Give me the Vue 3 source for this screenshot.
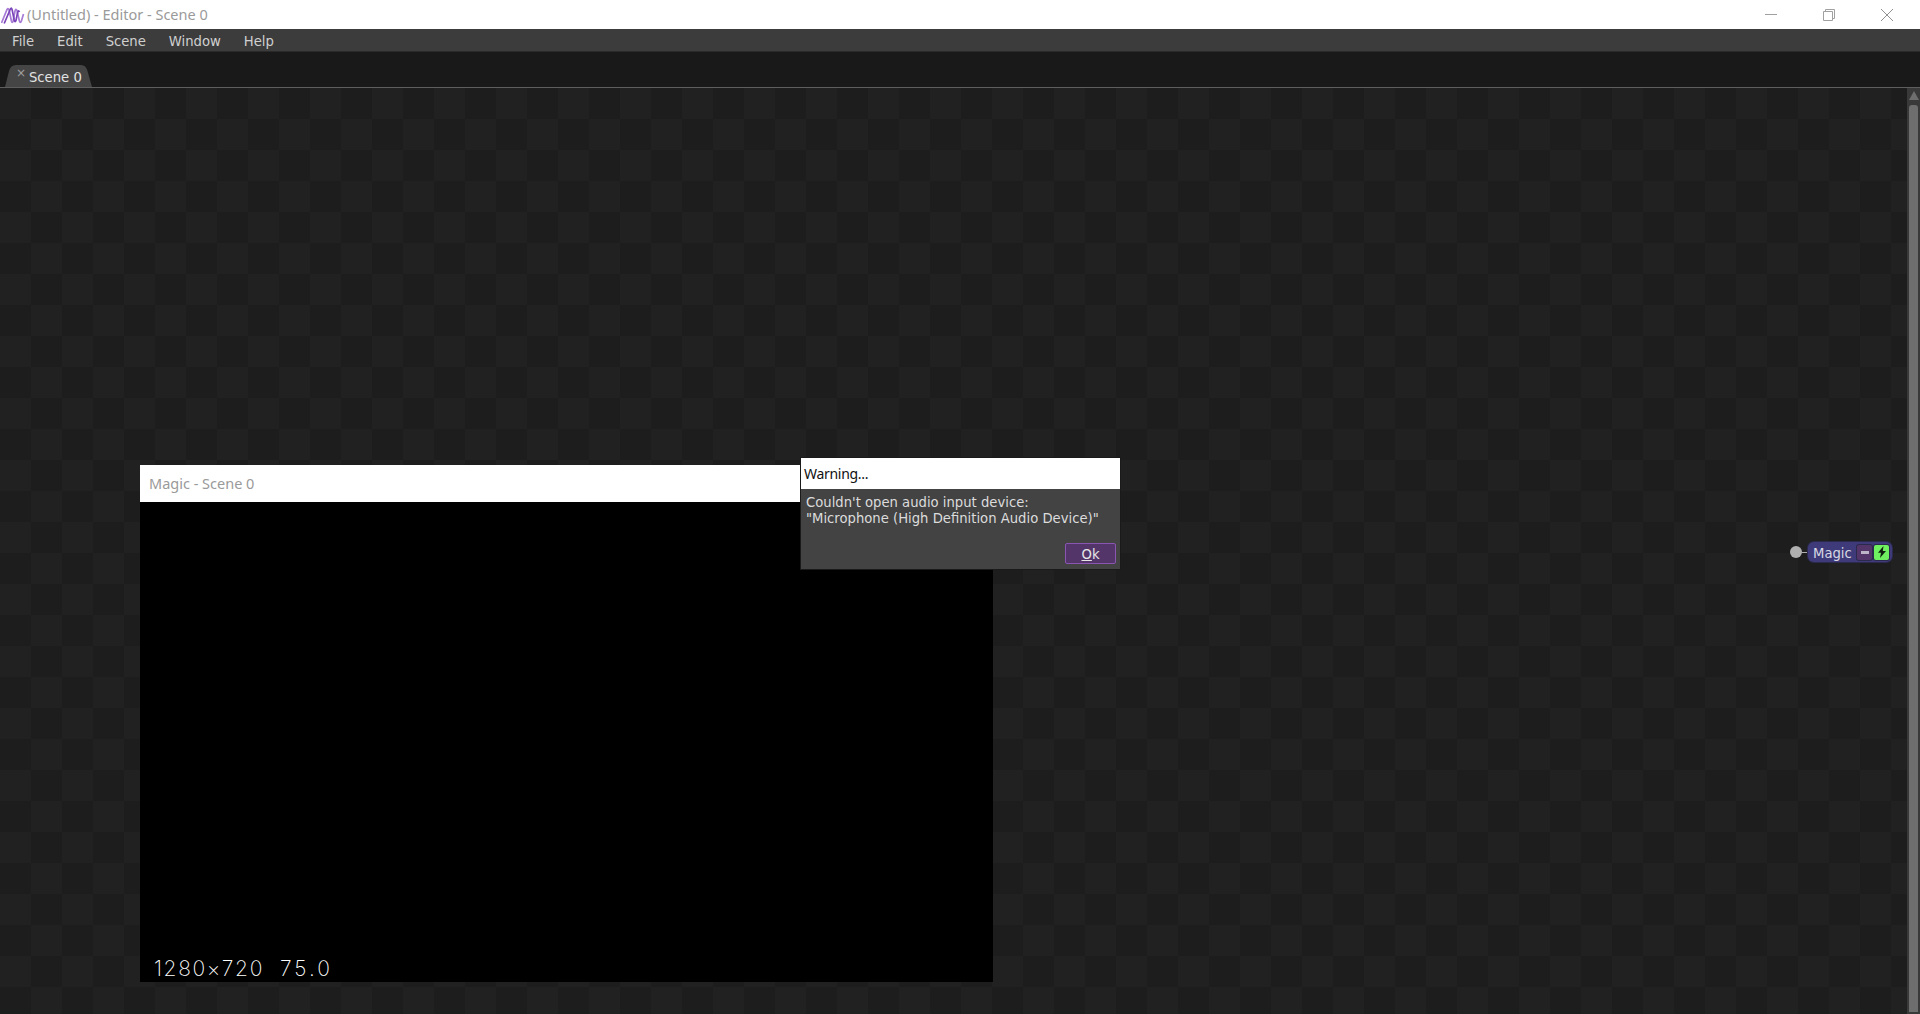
<template>
  <div class="editor">
    <header class="titlebar">
      <svg class="logo" viewBox="0 0 24 20" width="24" height="20">
        <path d="M0.5 17 L6 3.5 Q7.4 1.5 8.2 4.5 L10.4 15 Q11.2 18 12.2 15 L14 5 Q14.8 2 16 4.5 L18.4 15 Q19.4 18 20.4 15 L22.5 8" fill="none" stroke="#a77bd6" stroke-width="1.7" />
        <path d="M3.2 17.5 L9.4 3 Q10.4 1 11.2 4 L13.2 14 Q14 17 15 14.5 L16.6 6.5 Q17.4 3.5 18.5 6" fill="none" stroke="#7a45b8" stroke-width="1.7" />
      </svg>
      <span class="title-text">(Untitled) - Editor - Scene 0</span>
      <div class="window-controls">
        <svg width="12" height="12" viewBox="0 0 12 12"><path d="M0 5.5H12" stroke="#a0a0a0" fill="none" /></svg>
        <svg width="12" height="12" viewBox="0 0 12 12"><path d="M.5 2.5h9v9h-9zM2.5 2.5v-2h9v9h-2" stroke="#a0a0a0" fill="none" /></svg>
        <svg width="12" height="12" viewBox="0 0 12 12"><path d="M0 0L12 12M12 0L0 12" stroke="#909090" fill="none" /></svg>
      </div>
    </header>

    <nav class="menubar">
      <span v-for="item in menus" :key="item" class="menu-item">{{ item }}</span>
    </nav>

    <div class="tabstrip">
      <div class="tab">
        <span class="tab-close">×</span>
        <span class="tab-label">Scene 0</span>
      </div>
    </div>

    <main class="canvas">
      <div class="viewport">
        <section class="magic-window">
          <div class="magic-title">Magic - Scene 0</div>
          <div class="magic-screen">
            <span class="readout">1280×720</span>
            <span class="readout fps">75.0</span>
          </div>
        </section>

        <section class="dialog">
          <div class="dialog-title">Warning...</div>
          <div class="dialog-body">
            <p>Couldn't open audio input device:<br />"Microphone (High Definition Audio Device)"</p>
            <button class="ok-button"><u>O</u>k</button>
          </div>
        </section>

        <div class="node">
          <span class="node-port"></span>
          <span class="node-wire"></span>
          <div class="node-body">
            <span class="node-name">Magic</span>
            <span class="node-btn minus"><i></i></span>
            <span class="node-btn power">
              <svg width="10" height="12" viewBox="0 0 10 12"><path d="M6.5 0L1 6.8h3L3 12l6-7H5.8z" fill="#10210f" /></svg>
            </span>
          </div>
        </div>
      </div>

      <aside class="scrollbar">
        <span class="scroll-arrow"></span>
        <span class="scroll-thumb"></span>
      </aside>
    </main>
  </div>
</template>

<script setup>
const menus = ['File', 'Edit', 'Scene', 'Window', 'Help']
</script>

<style>
html, body {
  margin: 0;
  height: 100%;
  overflow: hidden;
  background: #1c1c1d;
}
</style>

<style scoped>
.editor {
  display: flex;
  flex-direction: column;
  width: 1920px;
  height: 1014px;
  overflow: hidden;
  font-family: "DejaVu Sans", sans-serif;
}

.titlebar {
  display: flex;
  align-items: center;
  flex: 0 0 29px;
  padding-left: 1px;
  background: #fff;
}

.logo {
  margin: 2px 2px 0 0;
}

.title-text {
  margin-bottom: 2px;
  font-family: "Noto Sans", sans-serif;
  font-size: 14.5px;
  color: #9a9a9a;
}

.window-controls {
  display: flex;
  gap: 46px;
  margin-left: auto;
  margin-right: 27px;
}

.menubar {
  display: flex;
  align-items: center;
  flex: 0 0 23px;
  padding: 2px 0 0 12px;
  gap: 23px;
  background: #3c3c3d;
  border-bottom: 1px solid #2a2a2b;
  box-sizing: border-box;
}

.menu-item {
  font-size: 13.2px;
  color: #d0d0d0;
}

.tabstrip {
  display: flex;
  align-items: flex-end;
  flex: 0 0 36px;
  box-sizing: border-box;
  padding-left: 5px;
  background: #19191a;
  border-bottom: 1px solid #5e5e5e;
}

.tab {
  position: relative;
  display: flex;
  align-items: center;
  height: 22px;
  width: 87px;
  padding: 3px 0 0 24px;
  box-sizing: border-box;
  background: #454546;
  clip-path: path("M0 22 L4 6 Q5.5 0 11 0 H76 Q81 0 82.5 6 L87 22 Z");
}

.tab-close {
  position: absolute;
  left: 11px;
  top: 1px;
  font-size: 12px;
  color: #a0a0a0;
}

.tab-label {
  font-size: 13.2px;
  color: #e2e2e2;
}

.canvas {
  display: flex;
  flex: 1;
  min-height: 0;
}

.viewport {
  position: relative;
  flex: 1;
  background: conic-gradient(#1d1d1e 25%, #212122 0 50%, #1d1d1e 0 75%, #212122 0) 0 0 / 62px 62px;
}

.magic-window {
  position: absolute;
  left: 140px;
  top: 377px;
  width: 853px;
  height: 517px;
  display: flex;
  flex-direction: column;
}

.magic-title {
  flex: 0 0 37px;
  display: flex;
  align-items: center;
  padding: 0 0 1px 9px;
  box-sizing: border-box;
  background: #fff;
  font-family: "Noto Sans", sans-serif;
  font-size: 14.5px;
  color: #9a9a9a;
}

.magic-screen {
  flex: 1;
  display: flex;
  align-items: flex-end;
  gap: 16px;
  padding: 0 0 1px 14px;
  background: #000;
}

.readout {
  font-family: Inter, sans-serif;
  font-weight: 200;
  font-size: 21px;
  letter-spacing: 1.6px;
  color: #fff;
}

.fps {
  letter-spacing: 3px;
}

.dialog {
  position: absolute;
  left: 801px;
  top: 370px;
  width: 319px;
  height: 111px;
  display: flex;
  flex-direction: column;
  box-shadow: 0 0 0 1px #1a1a1a;
}

.dialog-title {
  flex: 0 0 31px;
  display: flex;
  align-items: center;
  padding-left: 3px;
  background: #fff;
  font-family: "Noto Sans", sans-serif;
  font-size: 14px;
  letter-spacing: -0.3px;
  color: #111;
}

.dialog-body {
  flex: 1;
  position: relative;
  background: #434344;
}

.dialog-body p {
  margin: 6px 0 0 5px;
  font-size: 13.2px;
  line-height: 16px;
  color: #dcdcdc;
}

.ok-button {
  position: absolute;
  right: 4px;
  bottom: 5px;
  width: 51px;
  height: 21px;
  padding: 1px 0 0;
  background: #54356a;
  border: 1px solid #8a55b0;
  border-radius: 2px;
  font-family: "DejaVu Sans", sans-serif;
  font-size: 13.2px;
  color: #e6e6e6;
}

.node {
  position: absolute;
  left: 1790px;
  top: 454px;
  display: flex;
  align-items: center;
}

.node-port {
  width: 12px;
  height: 12px;
  border-radius: 50%;
  background: #b0b0b0;
}

.node-wire {
  width: 6px;
  height: 1px;
  background: #b0b0b0;
}

.node-body {
  display: flex;
  align-items: center;
  width: 84px;
  height: 20px;
  box-sizing: border-box;
  padding-left: 5px;
  background: #3f3b7a;
  border-radius: 6px;
  box-shadow: 0 0 0 1px #2b2a4d;
}

.node-name {
  width: 44px;
  padding-top: 2px;
  font-size: 13.2px;
  color: #d8d8e4;
}

.node-btn {
  display: flex;
  align-items: center;
  justify-content: center;
  flex: 0 0 15px;
  height: 15px;
  border-radius: 2px;
  box-shadow: 0 0 0 1px #2b2a4d;
}

.minus {
  background: #54356a;
  margin-right: 2px;
}

.minus i {
  width: 8px;
  height: 3px;
  background: #bdb4c8;
}

.power {
  background: #6ff060;
}

.scrollbar {
  display: flex;
  flex-direction: column;
  align-items: center;
  flex: 0 0 13px;
  background: #39393a;
}

.scroll-arrow {
  margin-top: 3px;
  width: 0;
  height: 0;
  border-left: 5px solid transparent;
  border-right: 5px solid transparent;
  border-bottom: 9px solid #6e6e6e;
}

.scroll-thumb {
  flex: 1;
  width: 9px;
  margin-top: 5px;
  margin-bottom: 2px;
  background: #6e6e6e;
  border-radius: 3px 3px 0 0;
}
</style>
